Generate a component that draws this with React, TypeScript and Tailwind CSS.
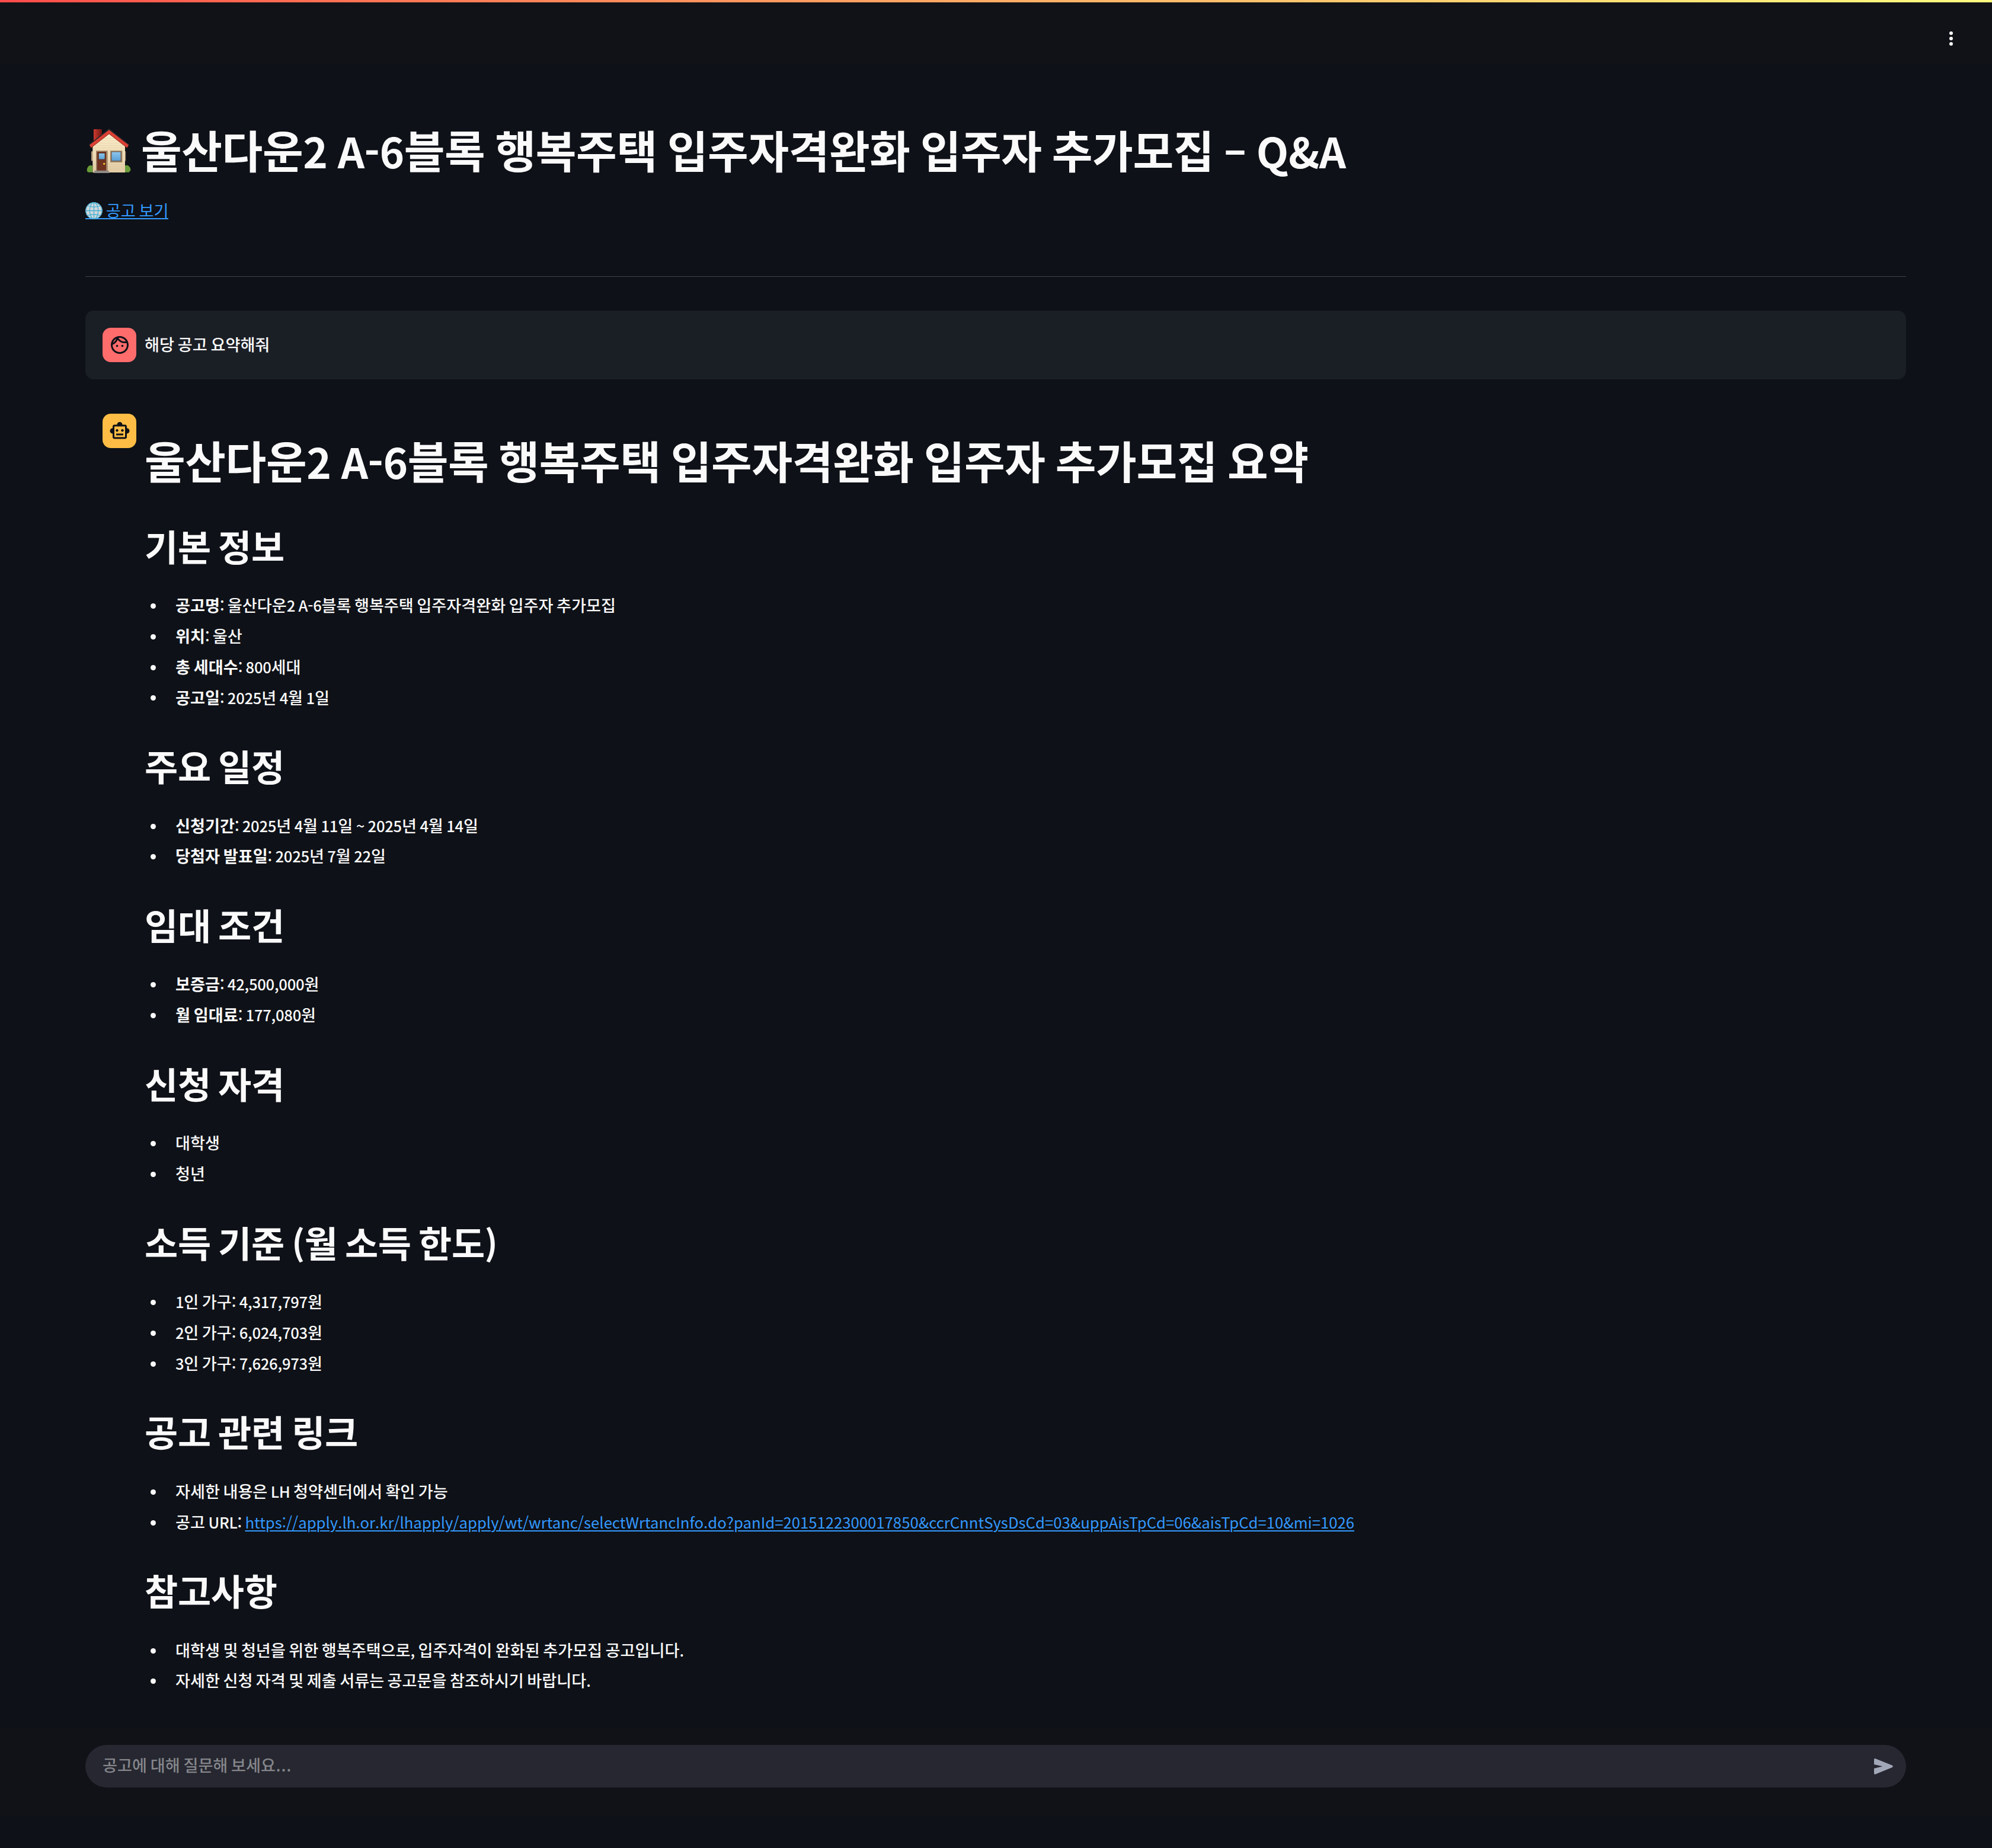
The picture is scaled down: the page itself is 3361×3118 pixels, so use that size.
import React from 'react';

const LINK_TEXT = 'text-[#3399ff]';
const LINK_LINE = 'underline decoration-[2px] underline-offset-[3px]';

/* Hangul and Latin runs are optically sized against each other. */
function T({ children, dense }: { children: string; dense?: boolean }) {
  const parts = children.split(/([\u3131-\uD79D]+|…)/).filter(Boolean);
  return (
    <>
      {parts.map((p, i) => {
        if (p === '…') {
          return (
            <span key={i} className="font-['Open_Sans',sans-serif] text-[1.2em] leading-none">
              {p}
            </span>
          );
        }
        if (/[\u3131-\uD79D]/.test(p)) {
          return (
            <span key={i} className="text-[0.943em] leading-none">
              {p}
            </span>
          );
        }
        return (
          <span
            key={i}
            className={dense ? 'text-[0.89em] leading-none tracking-[-0.01em]' : 'text-[0.893em] leading-none'}
          >
            {p}
          </span>
        );
      })}
    </>
  );
}

type Item = { label?: string; text: string; href?: string };

const SECTIONS: { title: string; items: Item[] }[] = [
  {
    title: '기본 정보',
    items: [
      { label: '공고명', text: ': 울산다운2 A-6블록 행복주택 입주자격완화 입주자 추가모집' },
      { label: '위치', text: ': 울산' },
      { label: '총 세대수', text: ': 800세대' },
      { label: '공고일', text: ': 2025년 4월 1일' },
    ],
  },
  {
    title: '주요 일정',
    items: [
      { label: '신청기간', text: ': 2025년 4월 11일 ~ 2025년 4월 14일' },
      { label: '당첨자 발표일', text: ': 2025년 7월 22일' },
    ],
  },
  {
    title: '임대 조건',
    items: [
      { label: '보증금', text: ': 42,500,000원' },
      { label: '월 임대료', text: ': 177,080원' },
    ],
  },
  { title: '신청 자격', items: [{ text: '대학생' }, { text: '청년' }] },
  {
    title: '소득 기준 (월 소득 한도)',
    items: [
      { text: '1인 가구: 4,317,797원' },
      { text: '2인 가구: 6,024,703원' },
      { text: '3인 가구: 7,626,973원' },
    ],
  },
  {
    title: '공고 관련 링크',
    items: [
      { text: '자세한 내용은 LH 청약센터에서 확인 가능' },
      {
        text: '공고 URL: ',
        href: 'https://apply.lh.or.kr/lhapply/apply/wt/wrtanc/selectWrtancInfo.do?panId=2015122300017850&ccrCnntSysDsCd=03&uppAisTpCd=06&aisTpCd=10&mi=1026',
      },
    ],
  },
  {
    title: '참고사항',
    items: [
      { text: '대학생 및 청년을 위한 행복주택으로, 입주자격이 완화된 추가모집 공고입니다.' },
      { text: '자세한 신청 자격 및 제출 서류는 공고문을 참조하시기 바랍니다.' },
    ],
  },
];

function House() {
  return (
    <svg viewBox="33 48 228 234" className="mt-[11px] ml-[2px] h-[78px] w-[76px] shrink-0">
      <defs>
        <linearGradient id="wall" x1="0" y1="0" x2="0" y2="1">
          <stop offset="0" stopColor="#fdf0cc" />
          <stop offset="1" stopColor="#e2cba4" />
        </linearGradient>
        <linearGradient id="brick" x1="0" y1="0" x2="1" y2="0">
          <stop offset="0" stopColor="#cf3a30" />
          <stop offset="1" stopColor="#6d1712" />
        </linearGradient>
        <linearGradient id="pane" x1="0" y1="0" x2="0" y2="1">
          <stop offset="0" stopColor="#8cc6ee" />
          <stop offset="1" stopColor="#5a9fd4" />
        </linearGradient>
      </defs>
      <rect x="69" y="54" width="42" height="60" fill="url(#brick)" />
      <path d="M45 131 147 50 249 131 240 144 147 66 54 144Z" fill="#26282b" />
      <rect x="57" y="166" width="8" height="48" fill="#b39b7d" />
      <rect x="226" y="166" width="6" height="48" fill="#8d7a63" />
      <path d="M64 136 147 72 228 136V273H64Z" fill="url(#wall)" />
      <path
        d="M120 100H174M106 112H188M92 124H202M78 136H216M66 148H228M66 160H228M66 232H228M66 244H228M66 256H228"
        stroke="#d9c59d"
        strokeWidth="1.500"
      />
      <path d="M48 134 147 58 246 134 238 148 147 77 56 148Z" fill="#dc4034" />
      <path d="M56 148 147 77 238 148" fill="none" stroke="#8f241c" strokeWidth="3" />
      <rect x="81" y="163" width="59" height="104" fill="#a08566" />
      <rect x="86" y="168" width="46" height="96" fill="#6f3320" />
      <rect x="94" y="175" width="32" height="32" fill="url(#pane)" stroke="#4b2013" strokeWidth="2" />
      <circle cx="122" cy="229" r="5" fill="#f6c62f" />
      <rect x="153" y="163" width="61" height="59" fill="#a08566" />
      <rect x="159" y="168" width="48" height="47" fill="url(#pane)" stroke="#6b5440" strokeWidth="3" />
      <path d="M36 268C33 256 38 244 48 238C56 236 62 238 64 242V272H42Z" fill="#699b3a" />
      <path d="M256 262C257 250 250 240 238 236L228 238V272H248Z" fill="#699b3a" />
      <path d="M74 263H144L149 276H69Z" fill="#8f8a84" />
    </svg>
  );
}

function Globe() {
  return (
    <svg viewBox="0 0 29 29" className="h-[29px] w-[29px] shrink-0">
      <circle cx="14.5" cy="14.5" r="14.2" fill="#d3d8da" />
      <g fill="none" stroke="#45b0d6" strokeWidth="1.300">
        <circle cx="14.5" cy="14.5" r="13.6" />
        <ellipse cx="14.5" cy="14.5" rx="7.200" ry="13.600" />
        <path d="M14.500 1V28M1 14.500H28M4 6.500Q14.500 10 25 6.500M4 22.500Q14.500 19 25 22.500" />
      </g>
    </svg>
  );
}

export default function App() {
  return (
    <div
      lang="ko"
      className="flex h-[3118px] w-[3361px] flex-col bg-[#0e1117] font-['Noto_Sans_CJK_KR',sans-serif] text-[28.8px] leading-[46px] font-medium [word-spacing:-0.05em] text-[#fafafa]"
    >
      <header className="flex h-[108px] shrink-0 flex-col bg-[#111217]">
        <div className="h-[4px] bg-linear-to-r from-[#ff4b4b] to-[#fffd80]" />
        <div className="flex flex-1 items-center justify-end pr-[55px]">
          <svg viewBox="0 0 28 28" className="mt-[18px] size-[28px]" fill="#fafafa">
            <circle cx="14" cy="5" r="3" />
            <circle cx="14" cy="14" r="3" />
            <circle cx="14" cy="23" r="3" />
          </svg>
        </div>
      </header>

      <main className="mr-[145px] ml-[144px] h-[2806px] shrink-0 pt-[94px]">
        <h1 className="flex h-[95px] items-center text-[79.2px] leading-[95px] font-bold tracking-[-0.005em] whitespace-pre">
          <House />
          <span className="ml-[16px] [word-spacing:-0.029em]">
            <T>울산다운2 A-6블록 행복주택 입주자격완화 입주자 추가모집 – Q&A</T>
          </span>
        </h1>
        <a
          className={`mt-[44px] flex h-[29px] w-[140px] items-start border-b-2 border-[#3399ff] leading-[24px] font-normal whitespace-pre ${LINK_TEXT}`}
        >
          <Globe />
          <span>
            <T>{' 공고 보기'}</T>
          </span>
        </a>
        <hr className="mt-[96px] border-t border-[#41434a]" />

        <section className="mt-[57px] flex h-[116px] items-center gap-[14px] rounded-[14px] bg-[#1a1e25] px-[29px]">
          <div className="grid h-[58px] w-[57px] place-items-center rounded-[14px] bg-[#ff6c6c]">
            <svg viewBox="0 0 24 24" className="size-[36px]" fill="#0e1117">
              <path d="M10.25 13c0 .69-.56 1.25-1.25 1.25S7.75 13.69 7.75 13s.56-1.25 1.25-1.25 1.25.56 1.25 1.25zM15 11.75c-.69 0-1.25.56-1.25 1.25s.56 1.25 1.25 1.25 1.25-.56 1.25-1.25-.56-1.25-1.25-1.25zm7 .25c0 5.52-4.48 10-10 10S2 17.52 2 12 6.48 2 12 2s10 4.48 10 10zM10.66 4.12C12.06 6.44 14.6 8 17.5 8c.46 0 .91-.05 1.34-.12C17.44 5.56 14.9 4 12 4c-.46 0-.91.05-1.34.12zM4.42 9.47c1.71-.97 3.03-2.55 3.66-4.44C6.37 6 5.05 7.58 4.42 9.47zM20 12c0-.78-.12-1.53-.33-2.24-.7.15-1.42.24-2.17.24-3.13 0-5.92-1.44-7.76-3.69C8.69 8.87 6.6 10.88 4 11.86c.01.04 0 .09 0 .14 0 4.41 3.59 8 8 8s8-3.59 8-8z" />
            </svg>
          </div>
          <p className="pb-[4px]">
            <T>해당 공고 요약해줘</T>
          </p>
        </section>

        <section className="mt-[58px] flex gap-[14px] px-[29px]">
          <div className="grid h-[58px] w-[57px] place-items-center rounded-[14px] bg-[#ffbd45]">
            <svg viewBox="0 0 24 24" className="size-[36px]" fill="#0e1117">
              <path d="M20 9V7c0-1.100-.9-2-2-2h-3c0-1.660-1.340-3-3-3S9 3.340 9 5H6c-1.100 0-2 .9-2 2v2c-1.660 0-3 1.340-3 3s1.340 3 3 3v4c0 1.100.9 2 2 2h12c1.100 0 2-.9 2-2v-4c1.660 0 3-1.340 3-3s-1.340-3-3-3zm-2 10H6V7h12v12zm-9-6c-.83 0-1.500-.67-1.500-1.500S8.170 10 9 10s1.500.67 1.500 1.500S9.830 13 9 13zm7.500-1.500c0 .83-.67 1.500-1.500 1.500s-1.500-.67-1.500-1.500.67-1.500 1.500-1.500 1.500.67 1.500 1.500zM8 15h8v2H8v-2z" />
            </svg>
          </div>
          <div className="pt-[27.7px]">
            <h1 className="text-[79.2px] leading-[95px] font-bold tracking-[-0.005em] [word-spacing:-0.029em]">
              <T>울산다운2 A-6블록 행복주택 입주자격완화 입주자 추가모집 요약</T>
            </h1>
            <div className="pt-[39.4px]">
              {SECTIONS.map((s) => (
                <div key={s.title} className="pb-[28.8px]">
                  <h2 className="pt-[20.5px] pb-[37.1px] text-[64.8px] leading-[77.8px] font-bold tracking-[-0.005em] [word-spacing:-0.055em]">
                    <T>{s.title}</T>
                  </h2>
                  <ul>
                    {s.items.map((it) => (
                      <li key={it.text} className="mb-[5.76px] flex h-[46.08px] items-center">
                        <span className="mt-[8px] mr-[33px] ml-[10px] size-[9px] rounded-full bg-[#fafafa]" />
                        <span className="mt-[3px] whitespace-pre">
                          {it.label && (
                            <strong className="font-bold">
                              <T>{it.label}</T>
                            </strong>
                          )}
                          <T dense>{it.text}</T>
                          {it.href && (
                            <a className={`font-normal ${LINK_TEXT} ${LINK_LINE}`}>
                              <T>{it.href}</T>
                            </a>
                          )}
                        </span>
                      </li>
                    ))}
                  </ul>
                </div>
              ))}
            </div>
          </div>
        </section>
      </main>

      <footer className="h-[150px] shrink-0 bg-[#111217] pt-[30px] pr-[145px] pl-[144px]">
        <div className="flex h-[72px] items-center justify-between rounded-full bg-[#262730] pr-[22px] pl-[29px]">
          <span className="pb-[7px] text-[#85868b]">
            <T>공고에 대해 질문해 보세요…</T>
          </span>
          <svg viewBox="0 0 36 36" className="size-[36px]" fill="#a3a8b8">
            <path d="M4 7Q4 4.300 6.500 5.300L34.500 16.500Q37 18.200 34.500 20L6.500 31.500Q4 32.500 4 30V21.800L18.500 18.200 4 15Z" />
          </svg>
        </div>
      </footer>
    </div>
  );
}
